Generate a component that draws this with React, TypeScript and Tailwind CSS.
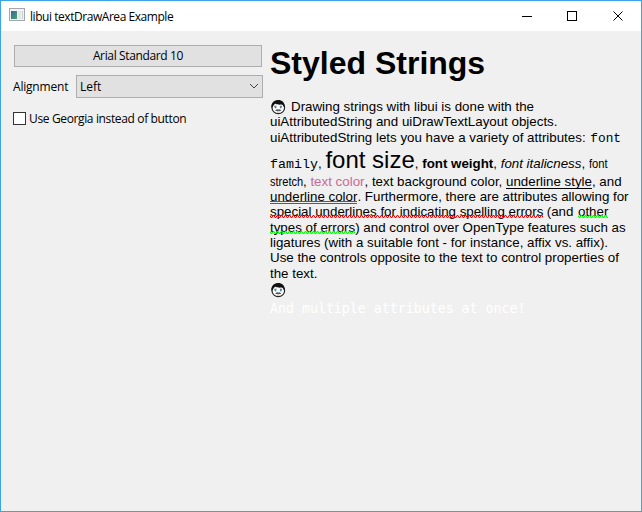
import type { ReactNode } from "react";

function Face() {
  return (
    <svg className="block shrink-0" width="16" height="16" viewBox="0 0 16 16">
      <ellipse cx="8.300" cy="8.700" rx="6.300" ry="5.900" fill="#fff" stroke="#222" strokeWidth="1.200" />
      <path d="M1.300 8.400C1 4 3.900 1.300 7.500 1c4.300-.3 7.300 2.200 7.300 6.900l-1 .2C13.400 6.600 12.700 5.900 11.500 5.600 9 5.900 6.500 5.500 5 4.500 4.600 5.700 3.300 6.300 2.300 8.400z" fill="#111" />
      <path d="M4.200 7.300l2.300-.1M9.800 7.200l2.300.1" stroke="#333" strokeWidth=".8" />
      <circle cx="5.500" cy="8.500" r=".9" fill="#278bc4" />
      <circle cx="10.800" cy="8.500" r=".9" fill="#278bc4" />
      <path d="M5.200 11.400c1-1 2-1.200 3-.7 1-.5 2-.3 3 .7-1 .5-2 .5-3 .1-1 .4-2 .4-3-.1z" fill="#111" />
      <path d="M7 12.900h2.400" stroke="#ba705b" strokeWidth=".7" />
    </svg>
  );
}

function Line({ className, children }: { className: string; children: ReactNode }) {
  return <div className={`flex items-baseline whitespace-pre ${className}`}>{children}</div>;
}

function Squiggle({ id, className, children }: { id: string; className: string; children: ReactNode }) {
  return (
    <span className={`relative ${className}`}>
      <span className="text-black">{children}</span>
      <svg className="absolute left-0 top-[11px] h-[3px] w-full">
        <defs>
          <pattern id={id} width="4" height="3" patternUnits="userSpaceOnUse">
            <path d="M0 1h1v1H0zM1 2h1v1H1zM2 1h1v1H2zM3 0h1v1H3z" fill="currentColor" />
            <path d="M0 2h1v1H0zM2 2h1v1H2zM0 0h1v1H0zM2 0h1v1H2z" fill="currentColor" opacity=".35" />
          </pattern>
        </defs>
        <rect width="100%" height="3" fill={`url(#${id})`} />
      </svg>
    </span>
  );
}

function TitleBar() {
  return (
    <header className="flex h-[30px] items-center bg-white">
      <svg className="ml-2 -mt-[2px]" width="16" height="14" viewBox="0 0 16 14">
        <defs>
          <linearGradient id="pane" x2="1" y2="1">
            <stop stopColor="#37679b" />
            <stop offset="1" stopColor="#49a36c" />
          </linearGradient>
        </defs>
        <rect x=".5" y=".5" width="15" height="12" fill="#f1f3f4" stroke="#a3a7ab" />
        <rect x="2" y="3" width="6" height="8" fill="url(#pane)" />
        <rect x="9" y="3" width="3" height="8" fill="#dfe8e2" />
        <rect x="13" y="3" width="1" height="8" fill="#c5d0d5" />
      </svg>
      <span className="ml-[5px] pt-[1px] text-[12px] tracking-[-0.45px]">libui textDrawArea Example</span>
      <svg className="ml-auto mr-[16px]" width="104" height="12" viewBox="0 0 104 12" fill="none" stroke="#000" shapeRendering="crispEdges">
        <path d="M1 6.500h10M46.500 1.500h9v9h-9z" />
        <path d="M92.500 1.500l9 9M101.500 1.500l-9 9" shapeRendering="auto" />
      </svg>
    </header>
  );
}

function Controls() {
  return (
    <section className="w-[262px] shrink-0 pl-3 text-[12px]">
      <div className="ml-[1px] mt-[14px] flex h-[22px] w-[248px] items-center justify-center border border-[#adadad] bg-[#e1e1e1]">
        <span className="tracking-[-0.36px]">Arial Standard 10</span>
      </div>
      <div className="mt-[7px] flex h-[24px] items-center">
        <span className="w-[63px] shrink-0 pt-[1px] tracking-[-0.2px]">Alignment</span>
        <div className="flex h-[23px] w-[187px] shrink-0 items-center justify-between border border-[#adadad] bg-[#e1e1e1] px-[3px]">
          <span className="pt-[1px]">Left</span>
          <svg width="10" height="6" viewBox="0 0 10 6" fill="none" stroke="#444"><path d="M1 1l4 4 4-4" /></svg>
        </div>
      </div>
      <div className="mt-[11px] flex h-[18px] items-center">
        <span className="h-[13px] w-[13px] border border-[#333] bg-white" />
        <span className="ml-[3px] pt-[1px] tracking-[-0.36px]">Use Georgia instead of button</span>
      </div>
    </section>
  );
}

function StyledText() {
  return (
    <section className="ml-[7px] w-[368px] font-['Liberation_Sans',Arial,sans-serif] text-[13.333px] leading-[15px]">
      <h1 className="h-[68px] pt-[12px] text-[32px] font-bold leading-[40px]">Styled Strings</h1>
      <div className="flex h-[15px]"><Face /><span className="ml-[5px]">Drawing strings with libui is done with the</span></div>
      <Line className="h-[16px]">uiAttributedString and uiDrawTextLayout objects.</Line>
      <Line className="h-[16px]">uiAttributedString lets you have a variety of attributes: <span className="ml-[1px] font-['Liberation_Mono',monospace] text-[12.8px]">font</span></Line>
      <Line className="h-[28px]"><span className="font-['Liberation_Mono',monospace]">family</span><span>, </span><span className="text-[24px] leading-[28px]">font size</span><span>, </span><b>font weight</b><span>, </span><i>font italicness</i><span>, </span><span className="origin-left scale-x-[.84]">font</span></Line>
      <Line className="h-[15px]"><span className="w-[33px] origin-left scale-x-[.83]">stretch</span>, <span className="text-[#c96a94]">text color</span>, text background color, <span className="underline underline-offset-[2px] [text-decoration-skip-ink:none]">underline style</span>, and</Line>
      <Line className="h-[15px]"><span className="relative">underline color<span className="absolute left-0 top-[12px] h-[3px] w-full border-y border-[#ff0080]" /></span>. Furthermore, there are attributes allowing for</Line>
      <Line className="h-[16px]"><Squiggle id="spelling" className="w-[273px] text-[#ff0000]">special underlines for indicating spelling errors</Squiggle><span className="w-[35px]"> (and </span><Squiggle id="other" className="w-[30px] text-[#00ff00]">other</Squiggle></Line>
      <Line className="h-[15px]"><Squiggle id="errors" className="text-[#00ff00]">types of errors</Squiggle>) and control over OpenType features such as</Line>
      <Line className="h-[15px]">ligatures (with a suitable font - for instance, affix vs. affix).</Line>
      <Line className="h-[16px]">Use the controls opposite to the text to control properties of</Line>
      <Line className="h-[16px]">the text.</Line>
      <Face />
      <div className="mt-[3px] whitespace-pre font-['DejaVu_Sans_Mono',monospace] text-[13.333px] tracking-[-0.04px] text-white">And multiple attributes at once!</div>
    </section>
  );
}

export default function App() {
  return (
    <main className="h-[512px] w-[642px] overflow-hidden border border-[#3ba3e8] bg-[#f0f0f0] font-['Open_Sans','Noto_Sans',sans-serif] text-black">
      <TitleBar />
      <div className="flex"><Controls /><StyledText /></div>
    </main>
  );
}
